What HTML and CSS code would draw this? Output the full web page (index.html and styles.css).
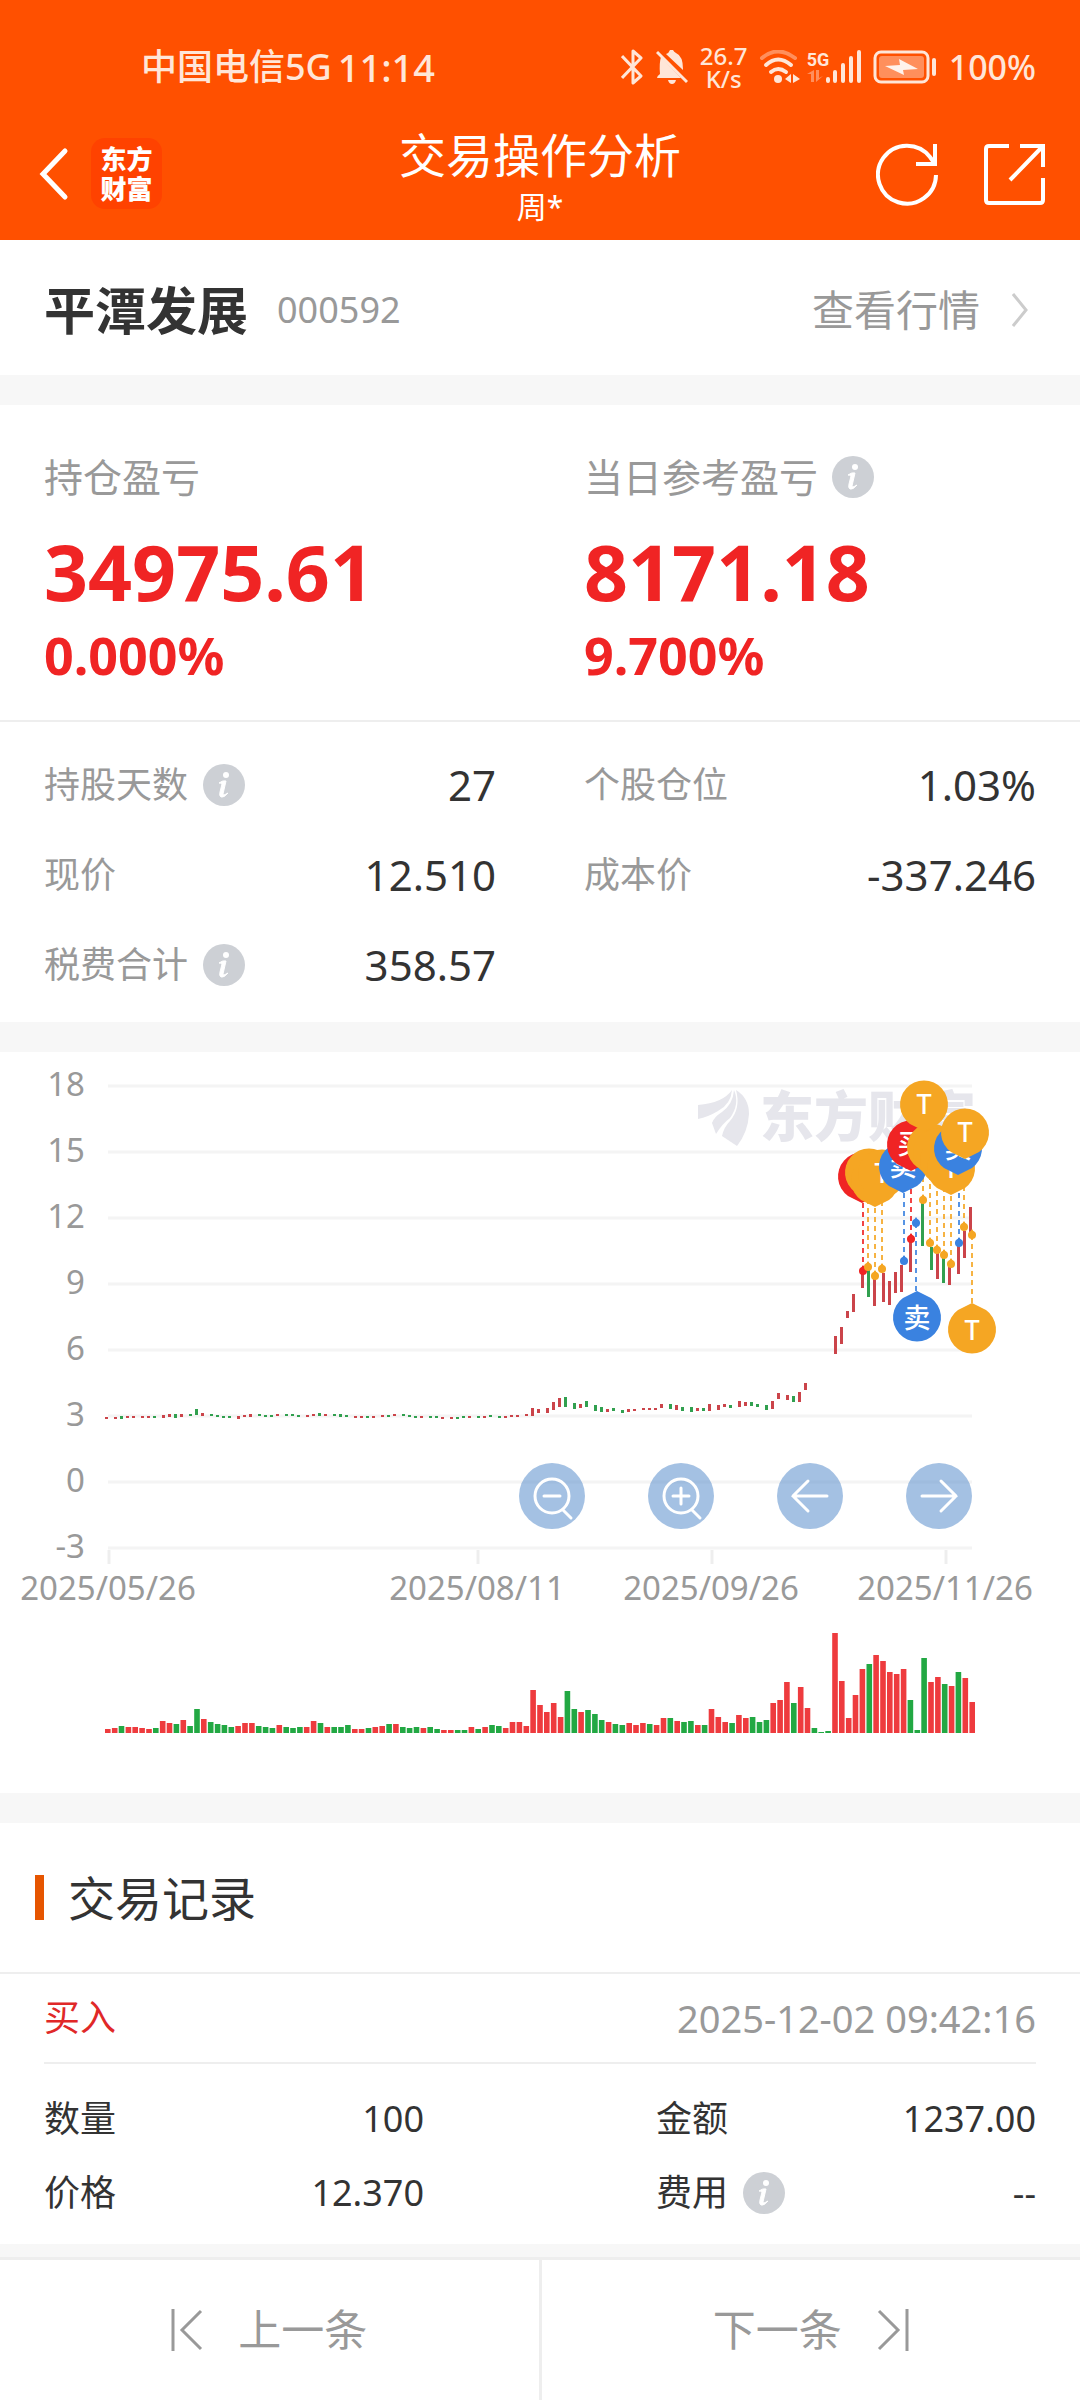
FILE: index.html
```html
<!DOCTYPE html>
<html lang="zh-CN">
<head>
<meta charset="utf-8">
<meta name="viewport" content="width=device-width, initial-scale=1">
<title>交易操作分析</title>
<link rel="stylesheet" href="styles.css">
</head>
<body>
<svg class="defs" width="0" height="0" aria-hidden="true">
  <symbol id="info" viewBox="0 0 42 42">
    <circle cx="21" cy="21" r="21" fill="#cdd0d5"/>
    <circle cx="23" cy="11" r="3" fill="#fff"/>
    <path d="M16 19 Q20 16 23 17 L20 30 Q20 32 25 29 Q21 34 18 33 Q16 32 17 28 L19 20 Q18 19 16 19Z" fill="#fff" stroke="#fff"/>
  </symbol>
</svg>

<header class="top">
  <div class="status">
    <div class="status-left"><span class="carrier">中国电信5G</span><span class="clock">11:14</span></div>
    <div class="status-right">
      <svg width="22" height="36" viewBox="0 0 22 36" fill="none" stroke="#ffe6d8" stroke-width="3" stroke-linejoin="round"><path d="M1 7 L20 27 L12 34 V2 L20 9 L1 29"/></svg>
      <svg class="bell" width="32" height="34" viewBox="0 0 32 34" fill="#ffe6d8"><path d="M10 4 Q13 3 14 0 H17 Q18 2 20 3 Q27 6 27 19 L27 20Z"/><path d="M5 7 L25 28 H1 Q1 26 4 24 Q3 13 5 7Z"/><path d="M12 30 H20 Q19 34 16 34 Q13 34 12 30Z"/><path d="M1 2 L31 32" stroke="#ffe6d8" stroke-width="3"/></svg>
      <div class="speed"><span>26.7</span><span>K/s</span></div>
      <svg width="42" height="34" viewBox="0 0 42 34" fill="none" stroke="#ffe6d8" stroke-width="4" stroke-linecap="round"><path d="M3 8 Q19 -5 36 8" stroke="#ff8f5c"/><path d="M7 15 Q19 4 32 15M12 22 Q19 16 27 22"/><circle cx="19" cy="29" r="4" fill="#ffe6d8" stroke="none"/><path d="M32 24v9l-6-4zM34 33v-9l7 5z" fill="#ffe6d8" stroke="none"/></svg>
      <div class="cell"><span class="net">5G</span>
        <svg width="16" height="14" viewBox="0 0 16 14" fill="#ff8f5c"><path d="M0 5 L7 1 V13 H4 V5ZM9 1 H12 V9 L16 7 L9 13Z"/></svg></div>
      <svg width="36" height="34" viewBox="0 0 36 34" stroke="#ffe6d8" stroke-width="4" stroke-linecap="round"><path d="M3 29V31M10 22V31M18 15V31M26 8V31M34 2V31"/></svg>
      <svg class="battery" width="64" height="34" viewBox="0 0 64 34"><rect x="2" y="2" width="53" height="30" rx="6" fill="none" stroke="#ffe6d8" stroke-width="3"/><rect x="6" y="6" width="45" height="22" rx="3" fill="#ff8f5c"/><path d="M12 16 L27 15 L26 9 L45 19 L30 20 L31 25Z" fill="#fff3ec"/><rect x="59" y="8" width="4" height="18" rx="2" fill="#ffe6d8"/></svg>
      <span class="percent">100%</span>
    </div>
  </div>
  <nav class="nav">
    <div class="nav-left">
      <button class="icon-btn" aria-label="返回"><svg width="34" height="54" viewBox="-4 0 34 54" fill="none" stroke="#fff" stroke-width="5" stroke-linecap="round"><path d="M26 4 L4 27 L26 50"/></svg></button>
      <div class="logo"><span>东方</span><span>财富</span></div>
    </div>
    <div class="nav-title"><h1>交易操作分析</h1><p>周*</p></div>
    <div class="nav-right">
      <button class="icon-btn" aria-label="刷新"><svg width="62" height="64" viewBox="0 0 62 64" fill="none" stroke="#fff" stroke-width="4"><path d="M60 33 A29 29 0 1 1 54 15 L59 22"/><path d="M59 2 V22 H40"/></svg></button>
      <button class="icon-btn" aria-label="分享"><svg width="62" height="64" viewBox="0 0 62 64" fill="none" stroke="#fff" stroke-width="4"><path d="M26 4 H6 Q3 4 3 7 V58 Q3 61 6 61 H57 Q60 61 60 58 V36M37 4 H60 V25M60 4 L27 38"/></svg></button>
    </div>
  </nav>
</header>

<main class="main">
  <section class="card stock">
    <h2>平潭发展</h2><span class="code">000592</span>
    <a class="quote" href="#quote">查看行情<svg width="16" height="34" viewBox="0 0 16 34" fill="none" stroke="#ccc" stroke-width="3"><path d="M1 1 L14 17 L1 33"/></svg></a>
  </section>

  <section class="card">
    <div class="profit">
      <div><p class="profit-label">持仓盈亏</p><p class="amount">34975.61</p><p class="rate">0.000%</p></div>
      <div><p class="profit-label">当日参考盈亏<svg class="info"><use href="#info"/></svg></p><p class="amount">8171.18</p><p class="rate">9.700%</p></div>
    </div>
    <dl class="stats">
      <div><dt>持股天数<svg class="info"><use href="#info"/></svg></dt><dd>27</dd></div>
      <div><dt>个股仓位</dt><dd>1.03%</dd></div>
      <div><dt>现价</dt><dd>12.510</dd></div>
      <div><dt>成本价</dt><dd>-337.246</dd></div>
      <div><dt>税费合计<svg class="info"><use href="#info"/></svg></dt><dd>358.57</dd></div>
    </dl>
  </section>

  <section class="card chart">
    <svg id="chart" class="chart-svg" viewBox="0 0 1080 741" role="img" aria-label="价格与成交量"></svg>
    <div class="tools">
      <button aria-label="缩小"><svg viewBox="0 0 66 66"><circle cx="33" cy="33" r="17"/><path d="M25 33H41M44 47L52 55"/></svg></button>
      <button aria-label="放大"><svg viewBox="0 0 66 66"><circle cx="33" cy="33" r="17"/><path d="M25 33H41M33 25V41M44 47L52 55"/></svg></button>
      <button aria-label="向左"><svg viewBox="0 0 66 66"><path d="M50 33H16M31 18L16 33L31 48"/></svg></button>
      <button aria-label="向右"><svg viewBox="0 0 66 66"><path d="M16 33H50M35 18L50 33L35 48"/></svg></button>
    </div>
  </section>

  <section class="card records">
    <h3>交易记录</h3>
    <div class="record">
      <div class="record-head"><span class="buy">买入</span><time>2025-12-02 09:42:16</time></div>
      <dl class="record-body">
        <div><dt>数量</dt><dd>100</dd></div>
        <div><dt>金额</dt><dd>1237.00</dd></div>
        <div><dt>价格</dt><dd>12.370</dd></div>
        <div><dt>费用<svg class="info"><use href="#info"/></svg></dt><dd>--</dd></div>
      </dl>
    </div>
  </section>
</main>

<footer class="pager">
  <button><svg width="32" height="44" viewBox="0 0 32 44"><path d="M2 1V43M30 3L11 22L30 41"/></svg>上一条</button>
  <button>下一条<svg width="32" height="44" viewBox="0 0 32 44"><path d="M30 1V43M2 3L21 22L2 41"/></svg></button>
</footer>
<script src="chart.js"></script>
</body>
</html>
```
FILE: styles.css
```css
* { box-sizing: border-box; margin: 0; padding: 0; }
body {
  min-height: 100vh;
  display: flex;
  flex-direction: column;
  background: #f7f7f7;
  color: #333;
  font-family: "Noto Sans", "Noto Sans CJK SC", sans-serif;
  font-size: 36px;
  line-height: 50px;
}
button { border: 0; background: none; font: inherit; color: inherit; }
svg { display: block; flex: none; }
.defs { position: absolute; }
a { color: inherit; text-decoration: none; }

.top { background: #ff5000; color: #fff; }
.status {
  height: 107px;
  padding: 26px 44px 0 141px;
  display: flex;
  align-items: center;
  justify-content: space-between;
  color: #ffe6d8;
}
.status-left, .status-right { display: flex; align-items: center; }
.status-left { gap: 6px; font-weight: 500; }
.clock { font-size: 38px; }
.bell { margin-left: 13px; }
.speed {
  display: flex;
  flex-direction: column;
  align-items: center;
  width: 48px;
  margin: 0 11px 0 12px;
  font-size: 24px;
  font-weight: 500;
  line-height: 23px;
}
.cell { width: 18px; margin-left: 6px; }
.net { display: block; font: 700 18px/19px "Liberation Sans Narrow", Roboto, sans-serif; }
.battery { margin-left: 12px; }
.percent { margin-left: 12px; font-size: 34px; font-weight: 500; }

.nav {
  height: 133px;
  padding: 0 35px;
  display: grid;
  grid-template-columns: 1fr auto 1fr;
  align-items: center;
}
.nav-left { display: flex; align-items: center; gap: 22px; }
.nav-right { display: flex; justify-content: flex-end; gap: 45px; }
.nav-title { text-align: center; }
.nav-title h1 { font-size: 47px; font-weight: 400; line-height: 66px; }
.nav-title p { font-size: 30px; line-height: 38px; }
.logo {
  width: 71px;
  height: 71px;
  border-radius: 14px;
  background: #ff4200;
  display: flex;
  flex-direction: column;
  align-items: center;
  justify-content: center;
  font-size: 26px;
  font-weight: 900;
  line-height: 30px;
}

.main { display: flex; flex-direction: column; gap: 30px; }
.card { background: #fff; }
.stock { height: 135px; padding: 4px 52px 0 44px; display: flex; align-items: center; }
.stock h2 { font-size: 51px; line-height: 70px; }
.code { margin-left: 29px; color: #999; }
.quote { margin-left: auto; display: flex; align-items: center; gap: 32px; font-size: 42px; color: #999; }

.info { width: 42px; height: 42px; }
.profit {
  display: grid;
  grid-template-columns: 1fr 1fr;
  column-gap: 88px;
  padding: 45px 44px 32px;
  border-bottom: 2px solid #eee;
}
.profit-label { display: flex; align-items: center; gap: 14px; font-size: 39px; line-height: 54px; color: #999; }
.amount { margin-top: 18px; font-size: 77px; font-weight: 700; line-height: 100px; color: #f02424; }
.rate { font-size: 52px; font-weight: 700; line-height: 66px; color: #f02424; }
.stats {
  display: grid;
  grid-template-columns: 1fr 1fr;
  column-gap: 88px;
  padding: 18px 44px 12px;
  color: #999;
}
.stats div, .record-body div { display: flex; align-items: center; justify-content: space-between; }
.stats div { height: 90px; }
dt { display: flex; align-items: center; gap: 15px; }
.stats dd { font-size: 42px; color: #333; }

.chart { position: relative; }
.chart-svg { width: 100%; }
.axis { font-size: 33px; fill: #999; }
.watermark { font-size: 54px; font-weight: 900; fill: #e6e6ec; }
.pin-text { font-size: 27px; font-weight: 500; fill: #fff; text-anchor: middle; }
.tools { position: absolute; top: 55.5%; right: 10%; display: flex; gap: 63px; }
.tools button { width: 66px; height: 66px; border-radius: 50%; background: rgba(74, 132, 200, .5); }
.tools svg { fill: none; stroke: #fff; stroke-width: 3; stroke-linecap: round; }

.records h3 {
  display: flex;
  align-items: center;
  gap: 24px;
  height: 151px;
  padding-left: 35px;
  border-bottom: 2px solid #eee;
  font-size: 47px;
  font-weight: 400;
}
.records h3::before { content: ""; width: 9px; height: 45px; background: #e65500; }
.record { padding: 0 44px; }
.record-head { display: flex; align-items: center; justify-content: space-between; height: 90px; border-bottom: 2px solid #eee; }
.buy { color: #e02828; }
time { font-size: 38px; color: #999; }
.record-body {
  display: grid;
  grid-template-columns: 1fr 1fr;
  column-gap: 232px;
  padding: 18px 0 14px;
}
.record-body div { height: 74px; }

.pager { margin-top: auto; display: flex; background: #fff; border-top: 3px solid #eee; }
.pager button {
  flex: 1;
  height: 140px;
  display: flex;
  align-items: center;
  justify-content: center;
  gap: 35px;
  font-size: 43px;
  color: #999;
}
.pager button + button { border-left: 3px solid #eee; }
.pager svg { fill: none; stroke: #999; stroke-width: 3; }
```
FILE: chart.js
```js
// Volume of each trading day, as bar heights.
const volumes = [
  4,5,7,6,6,5,4,5,12,10,9,13,7,24,14,11,9,8,6,7,10,10,7,6,5,8,6,5,6,6,12,10,6,6,6,8,4,4,5,6,7,9,9,6,5,6,5,6,4,3,3,3,3,6,4,6,8,7,5,11,11,7,
  43,28,21,30,16,42,24,21,23,19,13,11,9,8,10,8,10,9,8,15,15,12,11,12,8,8,24,16,11,10,18,15,16,11,13,30,33,51,30,46,25,5,1,2,
  100,52,15,38,64,69,78,72,61,59,64,33,3,75,51,56,49,47,61,55,31];

// [top, height] of each price bar; null where no bar is drawn.
const prices = [
  [365,1],[365,1],[364,2],[364,1],[364,1],[364,1],[364,1],[364,1],[363,2],[362,2],[362,3],[362,2],[362,1],[357,5],[361,2],
  [362,1],[363,1],[364,1],[364,1],[364,2],[363,1],[362,2],[362,1],[363,1],[363,1],[362,1],[362,1],[362,1],[363,1],[363,1],
  [362,1],[361,2],[362,1],[362,1],[362,2],[363,1],[364,1],[364,1],[364,1],[364,1],[363,1],[363,1],[362,1],[362,1],[363,1],
  [364,1],[364,1],[364,1],[364,1],[365,1],[365,1],[365,1],[364,1],[364,1],[364,1],[364,1],[363,1],[364,1],[364,1],[363,1],
  [363,1],[362,1],[356,7],[357,3],[356,4],[350,7],[346,8],[345,9],[351,5],[352,3],[349,5],[353,5],[355,4],[357,2],[356,2],
  [358,2],[357,2],[357,1],[356,1],[356,1],[356,1],[352,3],[352,4],[353,4],[355,3],[355,4],[356,2],[356,2],[352,6],[353,4],
  [352,2],[353,2],[349,5],[350,3],[350,3],[352,2],[353,4],[349,7],[341,5],[343,4],[344,5],[340,9],[331,6],null,null,null,
  [284,17],[275,16],[259,6],[242,17],[220,15],[218,26],[227,26],[221,28],[229,23],[220,20],[213,26],[190,29],null,[151,42],
  [195,22],[201,25],[205,25],[215,17],[194,27],[179,26],[155,24]];

// One letter per trading day: r = up, g = down.
const side = (
  'rrgrrrrgrrgrggrggggrrrgggrgggrrgrgggrrgrrgrgggrgg' +
  'rrggrgrggrrrr' +
  'rrrrrggrgggrggrrrgrrgrggrg' +
  'rrrgrrgggrrrgrrgggrrrrrgrrrrr' +
  'gggrrgrgrr').split('');
// Days whose price bar has another colour than its volume bar.
const priceSide = { 79: 'r', 117: 'r', 120: 'g', 124: 'r' };

const out = [];
for (let i = 0; i < 8; i++) {
  const y = 34 + 66 * i;
  out.push(`<path d="M108 ${y}H972" stroke="#f4f4f4" stroke-width="3"/>`);
  out.push(`<text class="axis" x="85" y="${y + 10}" text-anchor="end">${18 - 3 * i}</text>`);
}
[[109, '2025/05/26'], [478, '2025/08/11'], [712, '2025/09/26'], [946, '2025/11/26']].forEach(([x, t]) => {
  out.push(`<path d="M${x} 498V512" stroke="#eee" stroke-width="3"/>`);
  out.push(`<text class="axis" x="${x - 1}" y="548" text-anchor="middle">${t}</text>`);
});

out.push('<g fill="#e6e6ec"><path d="M698 67V53Q723 51 732 38Q731 52 718 59Q708 65 698 67Z"/><path d="M712 71Q714 65 722 60Q733 52 734 38Q740 52 730 66Q722 72 716 82Z"/><path d="M722 84Q724 75 730 69Q741 56 736 38Q749 46 749 62Q748 80 737 94Z"/></g>');
out.push('<text class="watermark" x="760" y="85">东方财富</text>');

prices.forEach((p, i) => {
  if (!p) return;
  const x = 105 + 3 * Math.round(i * 2.285 + 0.3);
  const up = (priceSide[i] || side[i]) === 'r';
  out.push(`<rect x="${x}" y="${p[0]}" width="3" height="${p[1] + 1}" fill="${up ? '#cb444a' : '#31a04f'}"/>`);
});
volumes.forEach((v, i) => {
  const x = 105 + i * 6.86;
  out.push(`<rect x="${x.toFixed(1)}" y="${681 - v}" width="5.6" height="${v}" fill="${side[i] === 'r' ? '#ee3b3e' : '#22a843'}"/>`);
});

const R = '#f02424', O = '#f5a623', B = '#3a82e0';
// Trade markers: x, dot y, line end y, colour.
[[863,219,140,R],[868,215,140,O],[875,224,150,O],[882,217,150,O],[904,209,140,B],[911,187,118,R],[916,171,240,B],
 [923,148,120,O],[930,191,124,O],[937,198,130,O],[944,203,136,O],[951,212,142,O],[959,191,122,B],[964,175,106,O],[972,183,252,O]
].forEach(([x, y, e, c]) => {
  out.push(`<path d="M${x} ${y}V${e}" stroke="${c}" stroke-width="2" stroke-dasharray="5 4" opacity=".85"/>`);
  out.push(`<path d="M${x - 4} ${y}L${x} ${y - 6}L${x + 4} ${y}L${x} ${y + 4}Z" fill="${c}"/><circle cx="${x}" cy="${y}" r="4" fill="${c}"/>`);
});
// Pins: x, y, colour, letter (none when a later pin covers it), direction of the tip.
[[862,124,R,'',1],[869,120,O,'',1],[875,128,O,'',1],[882,121,O,'T',1],[903,114,B,'卖',1],[911,92,R,'买',1],
 [931,95,O,'',1],[937,100,O,'',1],[944,108,O,'',1],[951,116,O,'T',1],[924,52,O,'T',1],[958,96,B,'卖',1],[965,80,O,'T',1],
 [917,266,B,'卖',-1],[972,278,O,'T',-1]
].forEach(([x, y, c, t, s]) => {
  out.push(`<g transform="translate(${x} ${y})"><path d="M0 ${27 * s}L-14 ${20 * s}A24 24 0 1 ${s > 0 ? 1 : 0} 14 ${20 * s}Z" fill="${c}"/>`);
  if (t) out.push(`<text class="pin-text" x="0" y="10">${t}</text>`);
  out.push('</g>');
});
document.getElementById('chart').innerHTML = out.join('');
```
